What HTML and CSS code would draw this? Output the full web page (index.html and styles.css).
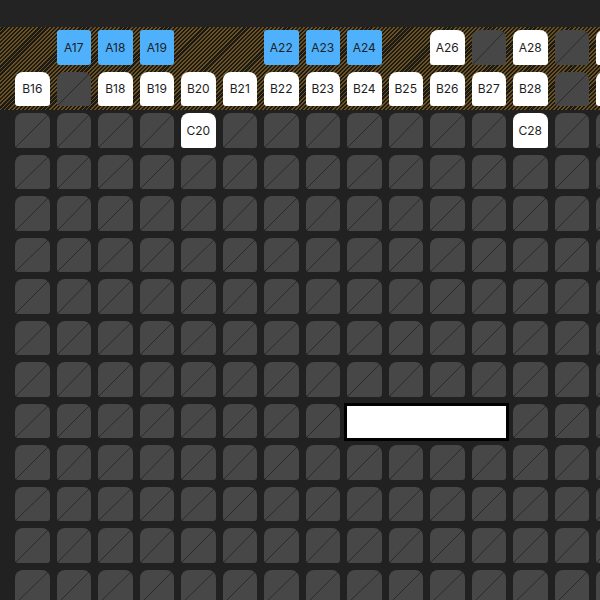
FILE: index.html
```html
<!DOCTYPE html>
<html lang="en">
<head>
  <meta charset="UTF-8" />
  <meta name="viewport" content="width=device-width, initial-scale=1.0"/>
  <title>Seat Map</title>
  <link rel="stylesheet" href="styles.css">
</head>
<body>

<div class="topbar"></div>

<div class="hall" id="hall">
  <div class="zone" id="zone"></div>
  <div id="rest"></div>
  <div class="selection"></div>
</div>

<script>
const FIRST = 16;
const COLS = 15;
const letters = "ABCDEFGHIJKLMNO".split("");

// x = no seat, s = selected, f = free, t = taken
const layout = {
  A: "xsssxxsssxftftf",
  B: "ftffffffffffftf",
  C: "ttttftttttttftt"
};

function buildRow(letter) {
  const row = document.createElement("div");
  row.className = "row";
  const map = layout[letter] || "t".repeat(COLS);
  for (let i = 0; i < COLS; i++) {
    const cell = document.createElement("div");
    cell.className = "cell";
    const kind = map[i];
    if (kind !== "x") {
      const seat = document.createElement("div");
      seat.className = "seat " + ({ s: "selected", f: "free", t: "taken" })[kind];
      if (kind !== "t") seat.innerText = letter + (FIRST + i);
      cell.appendChild(seat);
    }
    row.appendChild(cell);
  }
  return row;
}

letters.forEach((l, i) => {
  const target = i < 2 ? "zone" : "rest";
  document.getElementById(target).appendChild(buildRow(l));
});
</script>

</body>
</html>
```

FILE: styles.css
```css
* { box-sizing: border-box; }
body {
  margin: 0;
  font-family: 'Inter', 'Roboto', sans-serif;
  background: #212121;
  height: 100vh;
  overflow: hidden;
}
.topbar {
  height: 26.5px;
  background: #232323;
}
.hall {
  position: relative;
}
.zone {
  background: repeating-linear-gradient(135deg, #6c5220 0 1.3px, #1b1a17 1.3px 2.9px);
}
.row {
  display: flex;
  padding-left: 11.5px;
}
.cell {
  flex: 0 0 41.5px;
  height: 41.5px;
  padding: 3.5px;
}
.seat {
  width: 34.5px;
  height: 34.5px;
  display: flex;
  align-items: center;
  justify-content: center;
  font-size: 12px;
  color: #1e1e1e;
  border-radius: 8px 8px 3px 3px;
}
.seat.free { background: #fff; }
.seat.selected {
  background: #4fb1fc;
  border-radius: 3px;
}
.seat.taken {
  background:
    linear-gradient(to bottom right, transparent calc(50% - 0.7px), #2a2a2a 50%, transparent calc(50% + 0.7px)),
    #474747;
}
.selection {
  position: absolute;
  left: 344px;
  top: 376px;
  width: 165px;
  height: 38.5px;
  background: #fff;
  border: 3px solid #000;
}
```
